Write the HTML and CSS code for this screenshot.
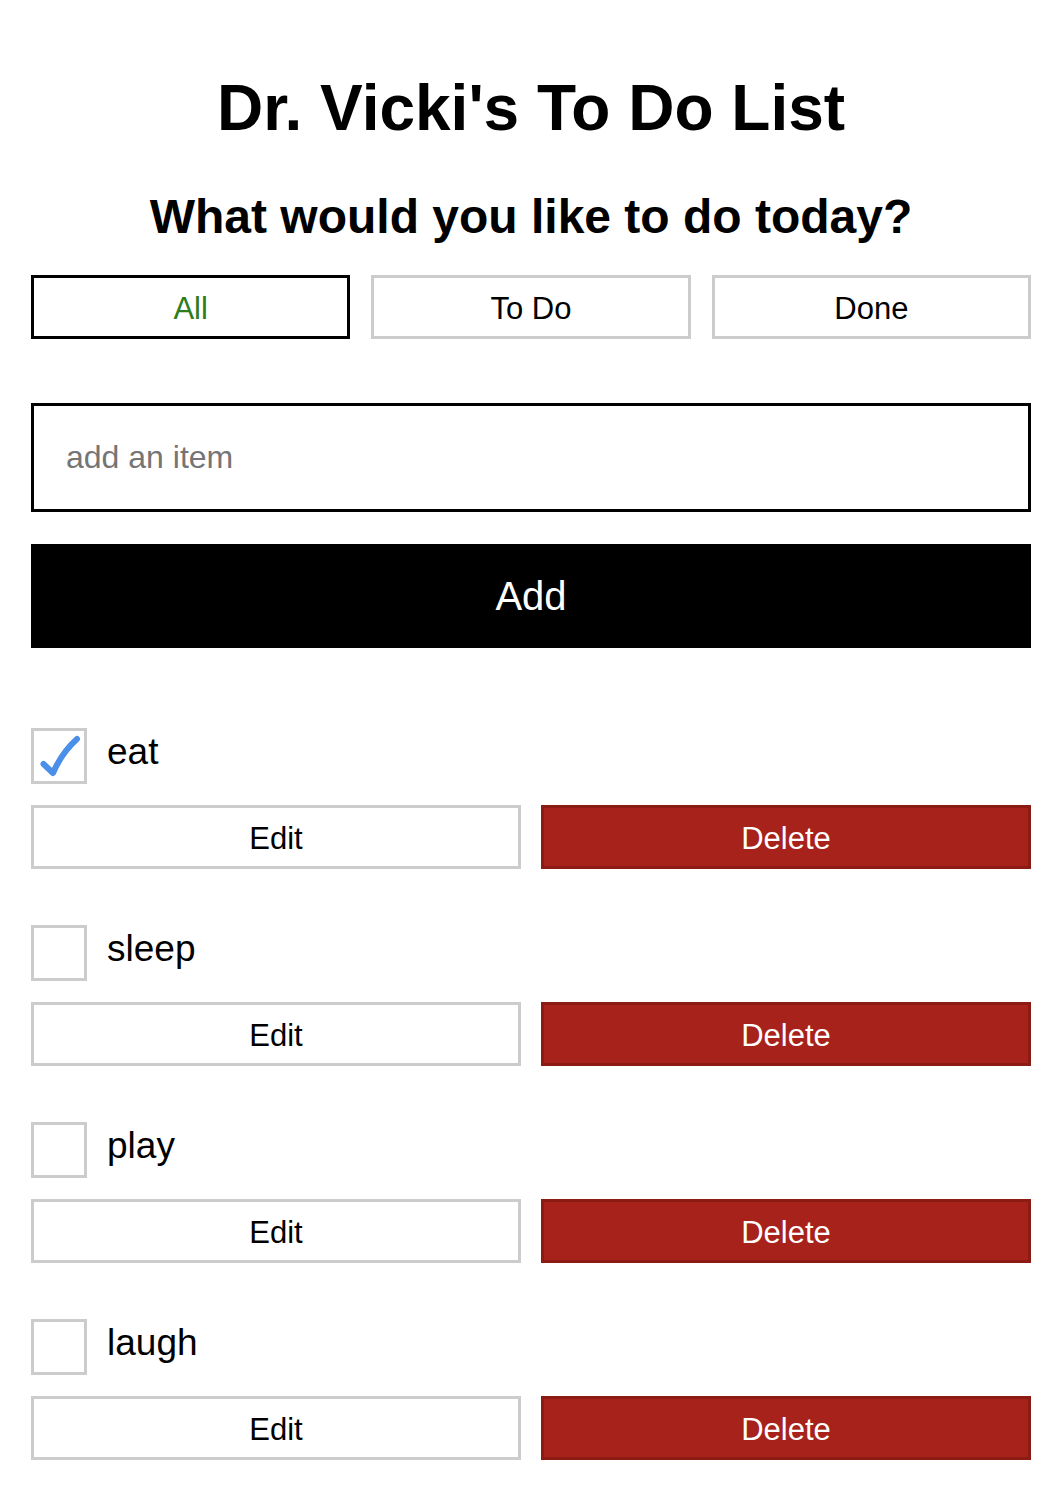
FILE: index.html
```html
<!DOCTYPE html>
<html lang="en">
<head>
<meta charset="utf-8">
<title>Dr. Vicki's To Do List</title>
<link rel="stylesheet" href="styles.css">
</head>
<body>
<div class="app">
  <h1 class="title">Dr. Vicki's To Do List</h1>
  <h2 class="subtitle">What would you like to do today?</h2>

  <div class="filters">
    <button class="filter filter-active">All</button>
    <button class="filter">To Do</button>
    <button class="filter">Done</button>
  </div>

  <form class="add-form">
    <input class="add-input" type="text" placeholder="add an item">
    <button class="add-btn" type="button">Add</button>
  </form>

  <ul class="todo-list">
    <li class="todo">
      <div class="todo-main">
        <span class="check">
          <svg class="check-mark" width="50" height="50" viewBox="0 0 50 50"><path d="M9.5 33 L19 42 C25 28 33 17 43 8" fill="none" stroke="#4a8fe8" stroke-width="6" stroke-linecap="round" stroke-linejoin="round"/></svg>
        </span>
        <span class="todo-label">eat</span>
      </div>
      <div class="todo-actions">
        <button class="btn-edit">Edit</button>
        <button class="btn-delete">Delete</button>
      </div>
    </li>
    <li class="todo">
      <div class="todo-main">
        <span class="check"></span>
        <span class="todo-label">sleep</span>
      </div>
      <div class="todo-actions">
        <button class="btn-edit">Edit</button>
        <button class="btn-delete">Delete</button>
      </div>
    </li>
    <li class="todo">
      <div class="todo-main">
        <span class="check"></span>
        <span class="todo-label">play</span>
      </div>
      <div class="todo-actions">
        <button class="btn-edit">Edit</button>
        <button class="btn-delete">Delete</button>
      </div>
    </li>
    <li class="todo">
      <div class="todo-main">
        <span class="check"></span>
        <span class="todo-label">laugh</span>
      </div>
      <div class="todo-actions">
        <button class="btn-edit">Edit</button>
        <button class="btn-delete">Delete</button>
      </div>
    </li>
  </ul>
</div>
</body>
</html>
```

FILE: styles.css
```css
* {
  box-sizing: border-box;
}

body {
  margin: 0;
  background: #ffffff;
  font-family: "Liberation Sans", Arial, Helvetica, sans-serif;
  color: #000;
}

.app {
  width: 1000px;
  margin-left: 31px;
  padding-top: 71px;
  padding-bottom: 40px;
}

.title {
  margin: 0;
  font-size: 64px;
  font-weight: 700;
  text-align: center;
  line-height: 74px;
}

.subtitle {
  margin: 44px 0 0;
  font-size: 48px;
  font-weight: 700;
  text-align: center;
  line-height: 55px;
}

.filters {
  margin-top: 31px;
  display: grid;
  grid-template-columns: repeat(3, 1fr);
  column-gap: 21px;
}

button {
  font-family: "Liberation Sans", Arial, Helvetica, sans-serif;
  cursor: pointer;
}

.filter {
  height: 64px;
  background: #fff;
  border: 3px solid #cccccc;
  font-size: 31px;
  color: #000;
  padding: 4px 0 0;
}

.filter-active {
  border-color: #000;
  color: #2d7d1b;
}

.add-form {
  margin: 64px 0 0;
  display: flex;
  flex-direction: column;
  gap: 32px;
}

.add-input {
  height: 109px;
  border: 3px solid #000;
  border-radius: 0;
  padding: 0 32px;
  font-family: "Liberation Sans", Arial, Helvetica, sans-serif;
  font-size: 32px;
  outline: none;
}

.add-input::placeholder {
  color: #757575;
}

.add-btn {
  height: 104px;
  background: #000;
  color: #fff;
  border: none;
  font-size: 40px;
  padding: 0;
}

.todo-list {
  list-style: none;
  margin: 80px 0 0;
  padding: 0;
  display: flex;
  flex-direction: column;
  gap: 56px;
}

.todo-main {
  display: flex;
  align-items: center;
  gap: 20px;
}

.check {
  width: 56px;
  height: 56px;
  border: 3px solid #cccccc;
  background: #fff;
  display: block;
  flex: none;
}

.check-mark {
  display: block;
}

.todo-label {
  font-size: 37px;
  line-height: 42px;
  padding-bottom: 8px;
}

.todo-actions {
  margin-top: 21px;
  display: grid;
  grid-template-columns: 1fr 1fr;
  column-gap: 20px;
}

.btn-edit,
.btn-delete {
  height: 64px;
  font-size: 31px;
  padding: 4px 0 0;
}

.btn-edit {
  background: #fff;
  border: 3px solid #cccccc;
  color: #000;
}

.btn-delete {
  background: #a6221a;
  border: 3px solid #8c1b14;
  color: #fff;
}
```
